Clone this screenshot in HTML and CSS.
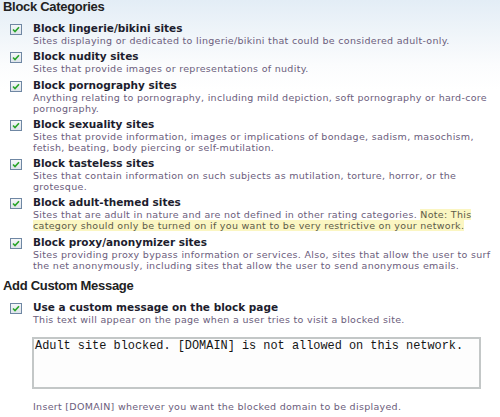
FILE: index.html
```html
<!DOCTYPE html>
<html>
<head>
<meta charset="utf-8">
<link rel="stylesheet" href="styles.css">
</head>
<body>
<div class="page">
  <h2 class="heading">Block Categories</h2>
  <div class="item">
    <span class="cb"><svg width="12" height="11" viewBox="0 0 12 11"><defs><linearGradient id="g" x1="0" y1="0" x2="0" y2="1"><stop offset="0" stop-color="#f6f8fa"/><stop offset="1" stop-color="#dde3ea"/></linearGradient></defs><rect x="0.5" y="0.5" width="11" height="10" fill="url(#g)" stroke="#6f87a3"/><path d="M3 5.5 L5 7.5 L9 3.2" fill="none" stroke="#28a428" stroke-width="1.6"/></svg></span>
    <div class="body"><div class="title">Block lingerie/bikini sites</div><div class="desc">Sites displaying or dedicated to lingerie/bikini that could be considered adult-only.</div></div>
  </div>
  <div class="item">
    <span class="cb"><svg width="12" height="11" viewBox="0 0 12 11"><rect x="0.5" y="0.5" width="11" height="10" fill="url(#g)" stroke="#6f87a3"/><path d="M3 5.5 L5 7.5 L9 3.2" fill="none" stroke="#28a428" stroke-width="1.6"/></svg></span>
    <div class="body"><div class="title">Block nudity sites</div><div class="desc">Sites that provide images or representations of nudity.</div></div>
  </div>
  <div class="item">
    <span class="cb"><svg width="12" height="11" viewBox="0 0 12 11"><rect x="0.5" y="0.5" width="11" height="10" fill="url(#g)" stroke="#6f87a3"/><path d="M3 5.5 L5 7.5 L9 3.2" fill="none" stroke="#28a428" stroke-width="1.6"/></svg></span>
    <div class="body"><div class="title">Block pornography sites</div><div class="desc">Anything relating to pornography, including mild depiction, soft pornography or hard-core pornography.</div></div>
  </div>
  <div class="item">
    <span class="cb"><svg width="12" height="11" viewBox="0 0 12 11"><rect x="0.5" y="0.5" width="11" height="10" fill="url(#g)" stroke="#6f87a3"/><path d="M3 5.5 L5 7.5 L9 3.2" fill="none" stroke="#28a428" stroke-width="1.6"/></svg></span>
    <div class="body"><div class="title">Block sexuality sites</div><div class="desc">Sites that provide information, images or implications of bondage, sadism, masochism, fetish, beating, body piercing or self-mutilation.</div></div>
  </div>
  <div class="item">
    <span class="cb"><svg width="12" height="11" viewBox="0 0 12 11"><rect x="0.5" y="0.5" width="11" height="10" fill="url(#g)" stroke="#6f87a3"/><path d="M3 5.5 L5 7.5 L9 3.2" fill="none" stroke="#28a428" stroke-width="1.6"/></svg></span>
    <div class="body"><div class="title">Block tasteless sites</div><div class="desc">Sites that contain information on such subjects as mutilation, torture, horror, or the grotesque.</div></div>
  </div>
  <div class="item">
    <span class="cb"><svg width="12" height="11" viewBox="0 0 12 11"><rect x="0.5" y="0.5" width="11" height="10" fill="url(#g)" stroke="#6f87a3"/><path d="M3 5.5 L5 7.5 L9 3.2" fill="none" stroke="#28a428" stroke-width="1.6"/></svg></span>
    <div class="body"><div class="title">Block adult-themed sites</div><div class="desc">Sites that are adult in nature and are not defined in other rating categories. <span class="note">Note: This category should only be turned on if you want to be very restrictive on your network.</span></div></div>
  </div>
  <div class="item">
    <span class="cb"><svg width="12" height="11" viewBox="0 0 12 11"><rect x="0.5" y="0.5" width="11" height="10" fill="url(#g)" stroke="#6f87a3"/><path d="M3 5.5 L5 7.5 L9 3.2" fill="none" stroke="#28a428" stroke-width="1.6"/></svg></span>
    <div class="body"><div class="title">Block proxy/anonymizer sites</div><div class="desc">Sites providing proxy bypass information or services. Also, sites that allow the user to surf the net anonymously, including sites that allow the user to send anonymous emails.</div></div>
  </div>

  <h2 class="heading heading2">Add Custom Message</h2>
  <div class="item">
    <span class="cb"><svg width="12" height="11" viewBox="0 0 12 11"><rect x="0.5" y="0.5" width="11" height="10" fill="url(#g)" stroke="#6f87a3"/><path d="M3 5.5 L5 7.5 L9 3.2" fill="none" stroke="#28a428" stroke-width="1.6"/></svg></span>
    <div class="body"><div class="title">Use a custom message on the block page</div><div class="desc">This text will appear on the page when a user tries to visit a blocked site.</div></div>
  </div>
  <div class="msgwrap">
    <div class="msg">Adult site blocked. [DOMAIN] is not allowed on this network.</div>
    <div class="desc hint">Insert [DOMAIN] wherever you want the blocked domain to be displayed.</div>
  </div>
</div>
</body>
</html>
```

FILE: styles.css
```css
html, body {
  margin: 0;
  padding: 0;
}
body {
  width: 500px;
  height: 417px;
  overflow: hidden;
  background: linear-gradient(to bottom, #e3edf6 0px, #eef4f9 30px, #fbfcfd 65px, #ffffff 90px);
}
.page {
  padding: 0 2px 0 3px;
}
.heading {
  margin: 0 0 8px 0;
  font-family: "Liberation Sans", Arial, sans-serif;
  font-weight: bold;
  font-size: 13px;
  line-height: 14px;
  letter-spacing: -0.3px;
  color: #222222;
}
.heading2 {
  margin-top: 8px;
}
.item {
  display: flex;
  align-items: flex-start;
  margin-bottom: 4.3px;
}
.cb {
  flex: none;
  width: 12px;
  height: 11px;
  margin: 2px 11px 0 7px;
  display: block;
}
.cb svg {
  display: block;
}
.body {
  flex: 1;
  min-width: 0;
}
.title {
  font-family: "DejaVu Sans", Verdana, sans-serif;
  font-weight: bold;
  font-size: 10.5px;
  line-height: 13px;
  color: #1d1d2e;
}
.desc {
  font-family: "DejaVu Sans", Verdana, sans-serif;
  font-size: 9.5px;
  letter-spacing: 0.3px;
  line-height: 11px;
  color: #6b5d7c;
}
.note {
  background: #fbf6c2;
  color: #5d5b48;
}
.msgwrap {
  padding-left: 29px;
  padding-top: 8px;
}
.msg {
  box-sizing: border-box;
  width: 449px;
  height: 52px;
  padding: 2px 1px 0 1px;
  border: 2px solid #c3c7c7;
  background: #fdfdfd;
  white-space: pre;
  font-family: "Liberation Mono", "Courier New", monospace;
  font-size: 11.9px;
  line-height: 11px;
  color: #151515;
}
.hint {
  margin-top: 12px;
  padding-left: 1px;
}
```
